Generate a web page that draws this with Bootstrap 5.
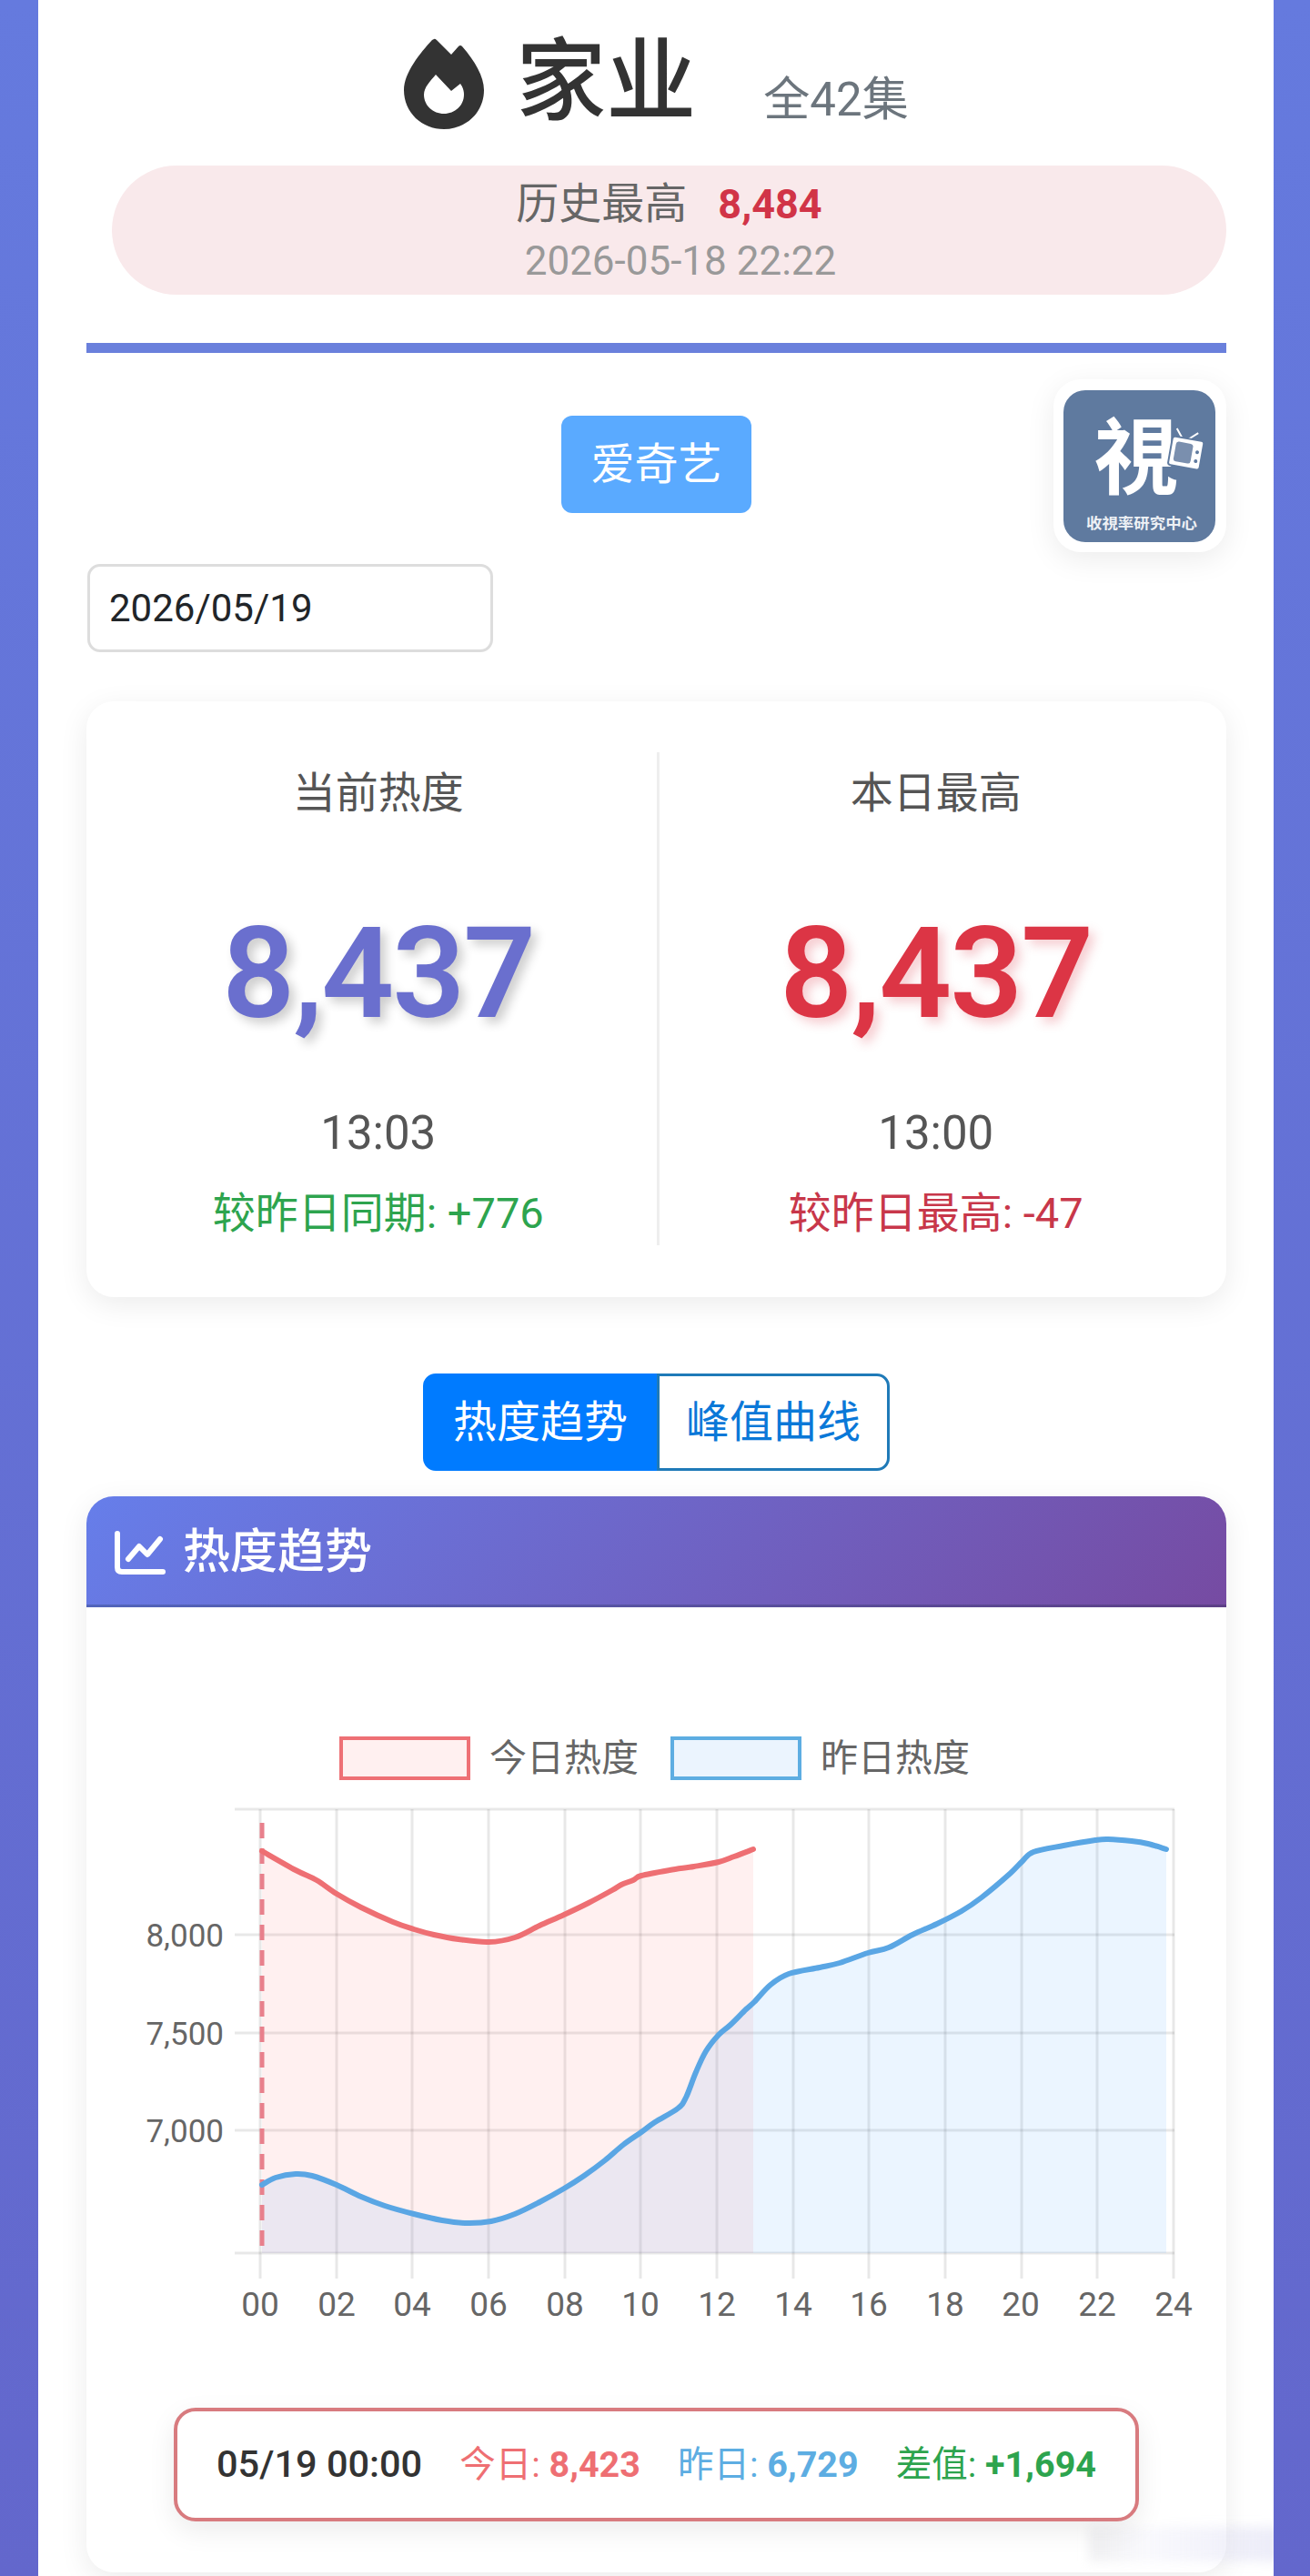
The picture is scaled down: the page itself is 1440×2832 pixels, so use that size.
<!DOCTYPE html>
<html lang="zh-CN">
<head>
    <meta charset="UTF-8">
    <meta name="viewport" content="width=device-width, initial-scale=1.0">
    <title>家业 - 热度趋势</title>
    <link href="https://cdn.jsdelivr.net/npm/bootstrap@5.3.0/dist/css/bootstrap.min.css" rel="stylesheet">
    <style>
        body {
            background: linear-gradient(180deg, #657ade, #6367cc);
            font-family: Roboto, "Noto Sans CJK SC", sans-serif;
            padding: 0 40px 0 42px;
            height: 2832px;
            overflow: hidden;
        }
        .page-box {
            position: relative;
            overflow: hidden;
            background: #fff;
            height: 2832px;
            padding: 0 52px 0 53px;
        }
        .title-row {
            height: 182px;
            padding-top: 30px;
        }
        .flame { width: 88px; height: 100px; margin-top: 12px; }
        .show-title {
            font-size: 99px;
            line-height: 120px;
            font-weight: 500;
            color: #333;
            margin: 0 0 0 35px;
        }
        .show-eps {
            font-size: 51px;
            line-height: 60px;
            color: #6c757d;
            margin: 50px 0 0 74px;
        }
        .peak-pill {
            background: #f9e9eb;
            border-radius: 71px;
            height: 142px;
            margin-left: 28px;
            padding-top: 8px;
        }
        .peak-label { font-size: 47px; line-height: 68px; color: #666; }
        .peak-value { font-size: 45px; font-weight: 700; color: #d13447; margin-left: 34px; }
        .peak-date { font-size: 44px; line-height: 56px; color: #999; padding-left: 25px; }
        .head-rule { height: 11px; background: #6a80dc; margin-top: 53px; }
        .plat-row { padding-top: 69px; }
        .plat-btn {
            background: #5aaaff;
            border: 0;
            border-radius: 12px;
            width: 209px;
            height: 107px;
            font-size: 48px;
            color: #fff;
            padding: 0;
        }
        .logo-box {
            position: absolute;
            top: 417px;
            right: 52px;
            width: 190px;
            height: 190px;
            padding: 12px 11px;
            background: #fff;
            border-radius: 30px;
            box-shadow: 0 8px 32px rgba(0, 0, 0, .08);
        }
        .logo-box svg { display: block; }
        .date-input.form-control {
            width: 446px;
            height: 97px;
            margin: 56px 0 0 1px;
            border: 3px solid #ddd;
            border-radius: 14px;
            font-size: 42px;
            padding: 0 21px;
            color: #212529;
        }
        .stat-card {
            margin-top: 54px;
            height: 655px;
            border: 0;
            border-radius: 30px;
            padding: 56px 15px 57px;
            box-shadow: 0 8px 32px rgba(0, 0, 0, .08);
        }
        .stat-col { width: 50%; text-align: center; }
        .stat-col + .stat-col { border-left: 3px solid #eee; }
        .stat-label { font-size: 47px; line-height: 90px; color: #555; }
        .stat-num { font-size: 140px; line-height: 160px; font-weight: 600; margin-top: 73px; letter-spacing: -2px; }
        .stat-num.is-blue { color: #6a6fce; text-shadow: 6px 6px 12px rgba(0, 0, 0, .2); }
        .stat-num.is-red { color: #dc3545; text-shadow: 6px 6px 12px rgba(220, 53, 69, .25); }
        .stat-time { font-size: 51px; line-height: 70px; color: #555; margin-top: 61px; }
        .stat-diff { font-size: 47px; line-height: 70px; margin-top: 18px; }
        .diff-up { color: #2da44e; }
        .diff-down { color: #c8374a; }
        .view-switch { margin-top: 84px; }
        .view-switch .btn {
            height: 107px;
            font-size: 48px;
            padding: 0;
            border-width: 3px;
            border-radius: 14px;
        }
        .view-switch .btn-primary { width: 258px; background: #007bff; border-color: #007bff; }
        .view-switch .btn-outline-primary { width: 256px; color: #0a78d8; border-color: #1f7ab8; background: #fff; }
        .trend-card {
            margin-top: 28px;
            height: 1183px;
            border: 0;
            border-radius: 30px;
            box-shadow: 0 8px 32px rgba(0, 0, 0, .08);
        }
        .trend-head.card-header {
            height: 122px;
            padding: 4px 31px 0;
            background: linear-gradient(135deg, #667eea, #764ba2);
            color: #fff;
            border-bottom: 3px solid rgba(0, 0, 0, .2);
            border-radius: 30px 30px 0 0;
            font-size: 52px;
            font-weight: 500;
        }
        .trend-head svg { margin-right: 19px; }
        .trend-body.card-body { padding: 0; }
        .trend-chart { display: block; }
        .trend-chart text { font-family: Roboto, "Noto Sans CJK SC", sans-serif; fill: #666; }
        .tip-box {
            width: 1061px;
            height: 125px;
            margin: 0 auto;
            gap: 41px;
            border: 4px solid #d87b7f;
            border-radius: 24px;
            background: #fff;
            font-size: 39.5px;
            box-shadow: 0 10px 30px rgba(0, 0, 0, .08);
        }
        .tip-time { font-size: 41.5px; font-weight: 500; color: #333; }
        .tip-today { color: #ee6f73; }
        .tip-yest { color: #5dade2; }
        .tip-diff { color: #2da44e; }
        .tip-box strong { font-weight: 700; }
        .wm-smudge {
            position: absolute;
            left: 1155px;
            top: 2778px;
            width: 210px;
            height: 38px;
            background: linear-gradient(90deg, rgba(205, 205, 210, .3), rgba(225, 225, 245, .2) 30%, rgba(200, 200, 235, .35));
            filter: blur(6px);
        }
    </style>
</head>
<body>
    <div class="page-box">
        <div class="title-row d-flex justify-content-center align-items-start">
            <svg class="flame" viewBox="0 0 88 100">
                <path fill="#333" fill-rule="evenodd" d="M33 1Q34 0 36 2L52 18L60 9Q62 7 64 9C78 25 88 42 88 57C88 82 68 100 44 100C20 100 0 82 0 57C0 38 18 16 31 2ZM35 40C29 47 22 54 22 62C22 74 32 83 44 83C56 83 66 74 66 62C66 58 65 54 62 50L52 58Z"/>
            </svg>
            <h1 class="show-title">家业</h1>
            <span class="show-eps">全42集</span>
        </div>
        <div class="peak-pill text-center">
            <div class="peak-label">历史最高<span class="peak-value">8,484</span></div>
            <div class="peak-date">2026-05-18 22:22</div>
        </div>
        <div class="head-rule"></div>

        <div class="plat-row text-center">
            <button type="button" class="btn plat-btn">爱奇艺</button>
        </div>
        <div class="logo-box">
            <svg width="167" height="167" viewBox="0 0 167 167">
                <rect width="167" height="167" rx="24" fill="#5f7a9f"/>
                <text x="80" y="107" text-anchor="middle" font-size="92" font-weight="700" fill="#fff" font-family="'Noto Sans CJK TC', sans-serif">視</text>
                <g transform="rotate(10 134 70)">
                    <path d="M128 54L120 44M134 54L144 45" stroke="#fff" stroke-width="2" fill="none"/>
                    <rect x="117" y="53" width="35" height="32" rx="3" fill="#fff" stroke="#5f7a9f" stroke-width="2"/>
                    <rect x="122" y="58" width="19" height="22" rx="3" fill="#7a8fae"/>
                    <circle cx="146.500" cy="76" r="2" fill="#5f7a9f"/>
                    <circle cx="146.500" cy="66" r="2" fill="#5f7a9f"/>
                </g>
                <text x="86" y="152" text-anchor="middle" font-size="16" font-weight="700" fill="#eef1f5" textLength="122" lengthAdjust="spacingAndGlyphs" font-family="'Noto Sans CJK TC', sans-serif">收視率研究中心</text>
            </svg>
        </div>
        <input type="text" class="form-control date-input" value="2026/05/19">

        <div class="card stat-card flex-row">
            <div class="stat-col">
                <div class="stat-label">当前热度</div>
                <div class="stat-num is-blue">8,437</div>
                <div class="stat-time">13:03</div>
                <div class="stat-diff diff-up">较昨日同期: +776</div>
            </div>
            <div class="stat-col">
                <div class="stat-label">本日最高</div>
                <div class="stat-num is-red">8,437</div>
                <div class="stat-time">13:00</div>
                <div class="stat-diff diff-down">较昨日最高: -47</div>
            </div>
        </div>

        <div class="view-switch d-flex justify-content-center">
            <div class="btn-group" role="group">
                <button type="button" class="btn btn-primary">热度趋势</button>
                <button type="button" class="btn btn-outline-primary">峰值曲线</button>
            </div>
        </div>

        <div class="card trend-card">
            <div class="card-header trend-head d-flex align-items-center">
                <svg width="56" height="48" viewBox="0 0 56 48" fill="none" stroke="#fff" stroke-linecap="round" stroke-linejoin="round">
                    <path stroke-width="6" d="M3 3V40Q3 45 8 45H53"/>
                    <path stroke-width="6" d="M15 31L27 17L36 26L50 9"/>
                </svg>
                热度趋势
            </div>
            <div class="card-body trend-body">
                <svg id="trendChart" class="trend-chart" width="1253" height="880" viewBox="95 1767 1253 880">
                    <rect x="375" y="1911" width="140" height="44" fill="#fff0f0" stroke="#ee7075" stroke-width="4"/>
                    <text x="538" y="1947" font-size="41">今日热度</text>
                    <rect x="739" y="1911" width="140" height="44" fill="#ebf4fe" stroke="#5dade2" stroke-width="4"/>
                    <text x="902" y="1947" font-size="41">昨日热度</text>
                    <g id="gridLines" stroke="rgba(0,0,0,.09)" stroke-width="3"></g>
                    <g font-size="35" text-anchor="end">
                        <text x="246" y="2140">8,000</text>
                        <text x="246" y="2248">7,500</text>
                        <text x="246" y="2355">7,000</text>
                    </g>
                    <g font-size="37" text-anchor="middle">
                        <text x="286" y="2546">00</text>
                        <text x="370" y="2546">02</text>
                        <text x="453" y="2546">04</text>
                        <text x="537" y="2546">06</text>
                        <text x="621" y="2546">08</text>
                        <text x="704" y="2546">10</text>
                        <text x="788" y="2546">12</text>
                        <text x="872" y="2546">14</text>
                        <text x="955" y="2546">16</text>
                        <text x="1039" y="2546">18</text>
                        <text x="1122" y="2546">20</text>
                        <text x="1206" y="2546">22</text>
                        <text x="1290" y="2546">24</text>
                    </g>
                    <path id="fillToday" fill="rgba(255,107,107,.1)"></path>
                    <path id="fillYest" fill="rgba(70,160,255,.11)"></path>
                    <line x1="288" y1="2004" x2="288" y2="2477" stroke="#e8808c" stroke-width="5" stroke-dasharray="17 11"></line>
                    <path id="lineYest" fill="none" stroke="#5aa6e4" stroke-width="6" stroke-linecap="round"></path>
                    <path id="lineToday" fill="none" stroke="#ee6f73" stroke-width="6" stroke-linecap="round"></path>
                </svg>
                <div class="tip-box d-flex align-items-center justify-content-center">
                    <span class="tip-time">05/19 00:00</span>
                    <span class="tip-today">今日: <strong>8,423</strong></span>
                    <span class="tip-yest">昨日: <strong>6,729</strong></span>
                    <span class="tip-diff">差值: <strong>+1,694</strong></span>
                </div>
            </div>
        </div>
        <div class="wm-smudge"></div>
    </div>

    <script>
        const BASE_Y = 2477;

        // puntos leidos de la captura, en pixeles de pagina
        const today = [[288,2035],[325,2056],[348,2067],[370,2082],[397,2097],[432,2113],[455,2121],[477,2127],[504,2132],[537,2135],[566,2130],[593,2117],[620,2105],[647,2092],[673,2078],[683,2072],[696,2067],[705,2062],[736,2056],[763,2052],[790,2047],[807,2041],[828,2033]];
        const yest = [[288,2402],[303,2394],[325,2390],[343,2392],[370,2402],[397,2415],[423,2425],[455,2434],[486,2441],[513,2444],[540,2442],[566,2434],[593,2421],[620,2406],[642,2392],[665,2375],[685,2358],[705,2344],[720,2333],[745,2318],[754,2306],[765,2278],[776,2255],[790,2237],[803,2226],[820,2209],[829,2201],[847,2182],[867,2170],[901,2163],[923,2158],[954,2147],[977,2141],[1003,2127],[1030,2115],[1057,2101],[1079,2086],[1110,2060],[1124,2046],[1136,2036],[1169,2029],[1204,2023],[1218,2022],[1244,2024],[1262,2027],[1282,2033]];

        function smoothPath(pts) {
            let d = `M${pts[0][0]} ${pts[0][1]}`;
            for (let i = 0; i < pts.length - 1; i++) {
                const p0 = pts[Math.max(i - 1, 0)];
                const p1 = pts[i];
                const p2 = pts[i + 1];
                const p3 = pts[Math.min(i + 2, pts.length - 1)];
                const c1x = p1[0] + (p2[0] - p0[0]) / 6;
                const c1y = p1[1] + (p2[1] - p0[1]) / 6;
                const c2x = p2[0] - (p3[0] - p1[0]) / 6;
                const c2y = p2[1] - (p3[1] - p1[1]) / 6;
                d += `C${c1x} ${c1y} ${c2x} ${c2y} ${p2[0]} ${p2[1]}`;
            }
            return d;
        }

        function drawSeries(pts, lineId, fillId) {
            const d = smoothPath(pts);
            const last = pts[pts.length - 1];
            document.getElementById(lineId).setAttribute('d', d);
            document.getElementById(fillId).setAttribute('d', `${d}L${last[0]} ${BASE_Y}L${pts[0][0]} ${BASE_Y}Z`);
        }

        function drawGrid() {
            const grid = document.getElementById('gridLines');
            let html = '';
            [1989, 2127, 2235, 2342, 2477].forEach(y => {
                html += `<line x1="258" y1="${y}" x2="1291" y2="${y}"></line>`;
            });
            for (let i = 0; i <= 12; i++) {
                const x = Math.round(286 + i * 83.67);
                html += `<line x1="${x}" y1="1989" x2="${x}" y2="2505"></line>`;
            }
            grid.innerHTML = html;
        }

        drawGrid();
        drawSeries(today, 'lineToday', 'fillToday');
        drawSeries(yest, 'lineYest', 'fillYest');
    </script>
    <script src="https://cdn.jsdelivr.net/npm/bootstrap@5.3.0/dist/js/bootstrap.bundle.min.js"></script>
</body>
</html>
